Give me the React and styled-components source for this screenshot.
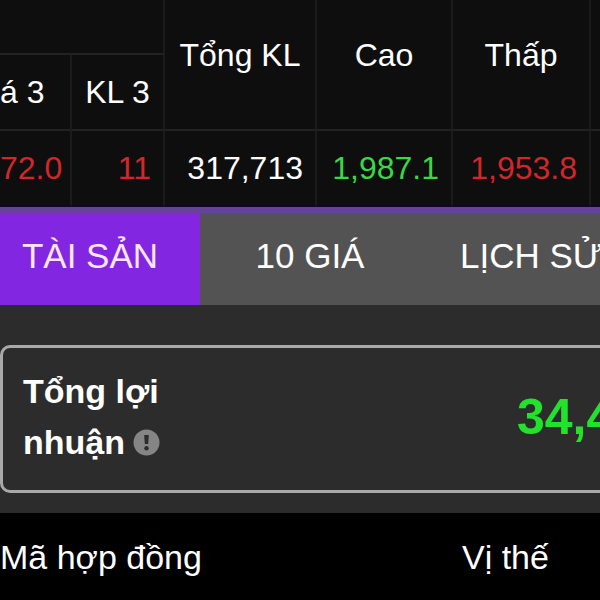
import React, { useState } from "react";
import styled, { createGlobalStyle } from "styled-components";

const GlobalStyles = createGlobalStyle`
  * {
    box-sizing: border-box;
  }
  html,
  body {
    margin: 0;
    background-color: #000;
  }
  body {
    overflow-x: hidden;
    font-family: "Liberation Sans", Arial, sans-serif;
    color: #fff;
  }
`;

const PageStyles = styled.main`
  width: 100%;
  overflow: hidden;
`;

const QuoteTable = styled.table`
  width: 100%;
  table-layout: fixed;
  border-collapse: separate;
  border-spacing: 0;
  background-color: #0e0e0e;
  font-size: 32px;
  line-height: 36px;
  white-space: nowrap;
  tr > [rowspan]:last-child,
  td:last-child {
    border-right: none;
  }
`;

const QuoteCol = styled.col`
  width: ${(props) => props.$width};
`;

const QuoteHead = styled.th`
  height: ${(props) => props.$height}px;
  padding: 0 0 ${(props) => (props.rowSpan ? 20 : 0)}px;
  border-right: 2px solid #1b1b1b;
  border-bottom: 2px solid #222;
  font-weight: normal;
  text-align: ${(props) => props.$align || "center"};
`;

const QuoteCell = styled.td`
  height: 76px;
  padding: 0 12px 0 0;
  border-right: 2px solid #1b1b1b;
  border-bottom: 3px solid #14061f;
  text-align: right;
  color: ${(props) => props.$color || "#fff"};
`;

const TabBar = styled.div`
  display: flex;
  border-top: 6px solid #66429c;
  background-color: #535353;
  overflow: hidden;
`;

const TabList = styled.div`
  display: flex;
  margin-left: -20px;
`;

const Tab = styled.button`
  flex-shrink: 0;
  min-width: 220px;
  height: 92px;
  padding: 0 40px 6px;
  border: none;
  background-color: ${(props) => (props.$active ? "#8226e2" : "transparent")};
  color: ${(props) => (props.$active ? "#fbe6ff" : "#fff")};
  font-family: inherit;
  font-size: 35px;
  line-height: 40px;
  white-space: nowrap;
  cursor: pointer;
`;

const Summary = styled.section`
  padding: 40px 0 20px;
  background-color: #2c2c2c;
  overflow: hidden;
`;

const ProfitCard = styled.div`
  display: flex;
  justify-content: space-between;
  align-items: center;
  margin-right: -12px;
  padding: 18px 12px 22px 20px;
  border: 3px solid #a9a9a9;
  border-radius: 10px;
`;

const ProfitLabel = styled.div`
  width: 180px;
  font-size: 34px;
  font-weight: bold;
  line-height: 51px;
`;

const InfoButton = styled.button`
  padding: 0;
  border: none;
  background: none;
  line-height: 0;
  cursor: pointer;
  svg {
    display: block;
    width: 27px;
    height: 27px;
  }
`;

const LabelLine = styled.span`
  display: flex;
  align-items: center;
  gap: 8px;
`;

const ProfitValue = styled.strong`
  width: 80px;
  font-size: 50px;
  line-height: 56px;
  white-space: nowrap;
  color: #22e22c;
`;

const PositionTable = styled.table`
  width: 100%;
  table-layout: fixed;
  border-collapse: collapse;
  background-color: #000;
  font-size: 34px;
  line-height: 40px;
  white-space: nowrap;
`;

const PositionHead = styled.th`
  width: ${(props) => props.$width};
  height: 88px;
  padding: 0;
  font-weight: normal;
  text-align: left;
`;

const columns = ["72px", "93px", "152px", "136px", "138px", "auto"];
const tabs = ["TÀI SẢN", "10 GIÁ", "LỊCH SỬ"];
const RED = "#d3262c";
const GREEN = "#38d846";

const InfoIcon = () => (
  <svg viewBox="0 0 27 27" aria-hidden="true">
    <circle cx="13.5" cy="13.5" r="13" fill="#858585" />
    <path d="M11.2 6h4.6l-.6 9h-3.4z" fill="#2c2c2c" />
    <circle cx="13.5" cy="19.3" r="2.2" fill="#2c2c2c" />
  </svg>
);

const App = () => {
  const [activeTab, setActiveTab] = useState(0);

  return (
    <PageStyles>
      <GlobalStyles />
      <QuoteTable>
        <colgroup>
          {columns.map((width) => (
            <QuoteCol key={width} $width={width} />
          ))}
        </colgroup>
        <thead>
          <tr>
            <QuoteHead colSpan={2} $height={55}></QuoteHead>
            <QuoteHead rowSpan={2}>Tổng KL</QuoteHead>
            <QuoteHead rowSpan={2}>Cao</QuoteHead>
            <QuoteHead rowSpan={2}>Thấp</QuoteHead>
            <QuoteHead rowSpan={2}></QuoteHead>
          </tr>
          <tr>
            <QuoteHead $height={76} $align="left">
              á 3
            </QuoteHead>
            <QuoteHead $height={76}>KL 3</QuoteHead>
          </tr>
        </thead>
        <tbody>
          <tr>
            <QuoteCell $color={RED}>72.0</QuoteCell>
            <QuoteCell $color={RED}>11</QuoteCell>
            <QuoteCell>317,713</QuoteCell>
            <QuoteCell $color={GREEN}>1,987.1</QuoteCell>
            <QuoteCell $color={RED}>1,953.8</QuoteCell>
            <QuoteCell></QuoteCell>
          </tr>
        </tbody>
      </QuoteTable>
      <TabBar>
        <TabList role="tablist">
          {tabs.map((tab, index) => (
            <Tab
              key={tab}
              type="button"
              role="tab"
              aria-selected={index === activeTab}
              $active={index === activeTab}
              onClick={() => setActiveTab(index)}
            >
              {tab}
            </Tab>
          ))}
        </TabList>
      </TabBar>
      <Summary>
        <ProfitCard>
          <ProfitLabel id="profit-label">
            Tổng lợi
            <LabelLine>
              nhuận
              <InfoButton type="button" aria-labelledby="profit-label">
                <InfoIcon />
              </InfoButton>
            </LabelLine>
          </ProfitLabel>
          <ProfitValue>34,4</ProfitValue>
        </ProfitCard>
      </Summary>
      <PositionTable>
        <thead>
          <tr>
            <PositionHead $width="77%">Mã hợp đồng</PositionHead>
            <PositionHead>Vị thế</PositionHead>
          </tr>
        </thead>
      </PositionTable>
    </PageStyles>
  );
};

export default App;
